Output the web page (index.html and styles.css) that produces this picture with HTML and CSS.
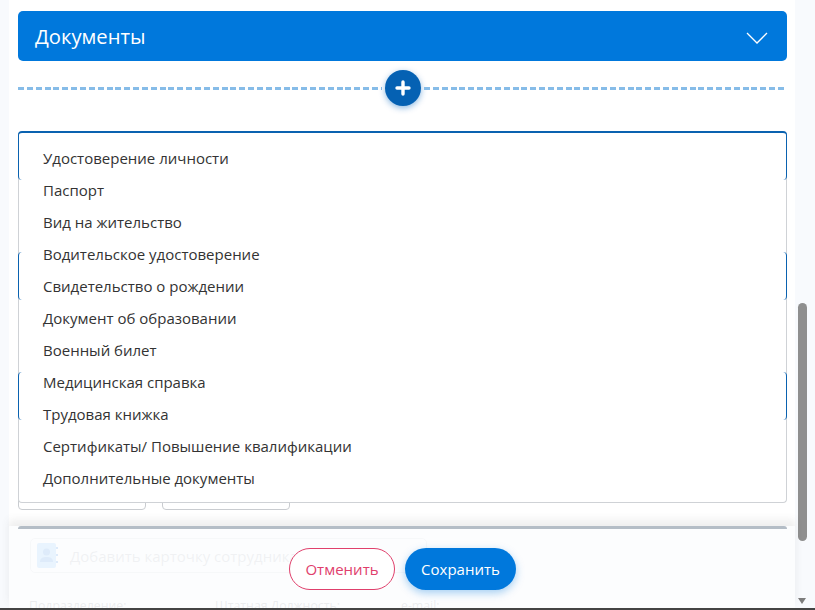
FILE: index.html
```html
<!DOCTYPE html>
<html lang="ru">
<head>
    <meta charset="UTF-8">
    <title>Документы</title>
    <link rel="stylesheet" href="styles.css">
</head>
<body>
    <div class="page">
        <div class="content">
            <div class="section-header">
                <span>Документы</span>
                <svg class="chevron" width="22" height="12" viewBox="0 0 22 12"><path d="M1 1l10 10L21 1" fill="none" stroke="#fff" stroke-width="1.3"/></svg>
            </div>

            <div class="add-row">
                <div class="dash"></div>
                <div class="add-button">
                    <svg width="16" height="16" viewBox="0 0 16 16"><path d="M8 2v12M2 8h12" stroke="#fff" stroke-width="3.4" stroke-linecap="round"/></svg>
                </div>
                <div class="dash"></div>
            </div>

            <!-- Fields behind the open list -->
            <div class="doc-form">
                <div class="field"></div>
                <div class="field"></div>
                <div class="field"></div>
                <div class="small-fields">
                    <div class="small-field"></div>
                    <div class="small-field"></div>
                </div>

                <ul class="dropdown">
                    <li>Удостоверение личности</li>
                    <li>Паспорт</li>
                    <li>Вид на жительство</li>
                    <li>Водительское удостоверение</li>
                    <li>Свидетельство о рождении</li>
                    <li>Документ об образовании</li>
                    <li>Военный билет</li>
                    <li>Медицинская справка</li>
                    <li>Трудовая книжка</li>
                    <li>Сертификаты/ Повышение квалификации</li>
                    <li>Дополнительные документы</li>
                </ul>
            </div>

            <!-- Faded card under the footer -->
            <div class="employee-card">
                <div class="card-title">
                    <svg class="card-icon" width="22" height="25" viewBox="0 0 22 25">
                        <path d="M3 0h15a2 2 0 0 1 2 2v21a2 2 0 0 1-2 2H3a2 2 0 0 1-2-2V2a2 2 0 0 1 2-2z" fill="#79bdfa"/>
                        <circle cx="10.500" cy="9" r="3.500" fill="#2a80e0"/>
                        <path d="M4 19c0-4 3-5 6.500-5s6.500 1 6.500 5z" fill="#2a80e0"/>
                        <path d="M20 5h2M20 12h2M20 19h2" stroke="#2a80e0" stroke-width="2"/>
                    </svg>
                    <span>Добавить карточку сотрудника</span>
                </div>
                <div class="card-labels">
                    <span class="card-label">Подразделение:</span>
                    <span class="card-label">Штатная Должность:</span>
                    <span class="card-label">e-mail:</span>
                </div>
            </div>
        </div>

        <div class="scrollbar">
            <div class="thumb"></div>
            <div class="arrow"></div>
        </div>

        <div class="footer">
            <button class="btn btn-cancel">Отменить</button>
            <button class="btn btn-save">Сохранить</button>
        </div>
    </div>
    <div class="bottom-line"></div>
</body>
</html>
```

FILE: styles.css
```css
html, body {
    height: 100%;
    margin: 0;
    overflow: hidden;
}
body {
    font-family: "Open Sans", "Noto Sans", Arial, sans-serif;
    background-color: #f8fafd;
    color: #333;
}
.page {
    position: relative;
    display: flex;
    height: 608px;
    overflow: hidden;
}
.content {
    width: 769px;
    margin-left: 9px;
    padding: 11px 8px 0 9px;
    background-color: #fff;
    flex-shrink: 0;
}
.section-header {
    display: flex;
    justify-content: space-between;
    align-items: center;
    height: 50px;
    padding: 0 19px 0 17px;
    background-color: #0078dc;
    border-radius: 5px;
    color: #fff;
    font-size: 20.2px;
}
.chevron {
    margin-top: 3px;
}
.add-row {
    display: flex;
    align-items: center;
    gap: 3px;
    height: 36px;
    margin-top: 9px;
}
.dash {
    flex: 1;
    height: 3px;
    background-image: repeating-linear-gradient(90deg, #86bce8 0, #86bce8 6px, transparent 6px, transparent 8.85px);
}
.add-button {
    display: flex;
    align-items: center;
    justify-content: center;
    width: 36px;
    height: 36px;
    border-radius: 50%;
    background-color: #0561b3;
    box-shadow: 0 2px 6px rgba(0, 100, 190, 0.45);
}
.doc-form {
    position: relative;
    margin-top: 25px;
}
/* only the side borders of these show past the open list */
.field {
    position: relative;
    z-index: 1;
    box-sizing: border-box;
    height: 48px;
    margin-bottom: 72px;
    border-left: 1px solid #0a62b0;
    border-right: 1px solid #0a62b0;
    border-radius: 4px;
}
.field:first-child {
    height: 49px;
    border-top: 2px solid #0a62b0;
}
.field:nth-child(3) {
    margin-bottom: 70px;
}
.small-fields {
    display: flex;
    gap: 16px;
}
.small-field {
    box-sizing: border-box;
    width: 128px;
    height: 20px;
    border: 1px solid #c9ccd0;
    border-radius: 4px;
}
.dropdown {
    position: absolute;
    top: 2px;
    left: 0;
    right: 0;
    box-sizing: border-box;
    height: 370px;
    margin: 0;
    padding: 9px 0 0 24px;
    list-style: none;
    background-color: #fff;
    border: 1px solid #cfd2d6;
    border-top: none;
    border-radius: 0 0 4px 4px;
}
.dropdown li {
    height: 32px;
    line-height: 32px;
    font-size: 15px;
    color: #333;
}
.employee-card {
    margin-top: 28px;
}
.card-title {
    display: flex;
    align-items: center;
    gap: 12px;
    box-sizing: border-box;
    width: 397px;
    height: 35px;
    margin-left: 12px;
    padding: 0 5px;
    border: 1px solid #d6d8dc;
    border-radius: 5px;
    font-size: 15px;
    color: #a8acb2;
}
.card-labels {
    display: flex;
    margin-top: 24px;
    padding-left: 11px;
    font-size: 12.3px;
    color: #878a90;
}
.card-label {
    width: 186px;
}
.scrollbar {
    position: relative;
    flex: 1;
}
.thumb {
    position: absolute;
    top: 303px;
    left: 3px;
    width: 9px;
    height: 238px;
    border-radius: 5px;
    background-color: #8f8f8f;
}
.arrow {
    position: absolute;
    top: 598px;
    left: 3px;
    width: 0;
    height: 0;
    border-left: 4.500px solid transparent;
    border-right: 4.500px solid transparent;
    border-top: 6px solid #7d7d7d;
}
.footer {
    position: absolute;
    top: 526px;
    left: 9px;
    width: 786px;
    height: 82px;
    box-sizing: border-box;
    padding: 22px 0 0 280px;
    display: flex;
    gap: 10px;
    align-items: flex-start;
    background-color: rgba(252, 253, 254, 0.86);
    box-shadow: 0 -6px 8px rgba(90, 90, 90, 0.1);
}
.footer::before {
    content: "";
    position: absolute;
    top: 0;
    left: 9px;
    width: 769px;
    height: 3px;
    background-color: #b4bdc6;
    border-radius: 4px 4px 0 0;
}
.btn {
    height: 42px;
    border-radius: 21px;
    font-family: inherit;
    font-size: 15px;
    cursor: pointer;
}
.btn-cancel {
    width: 106px;
    background-color: #fff;
    border: 1px solid #e0406c;
    color: #e0406c;
}
.btn-save {
    width: 111px;
    background-color: #0078dc;
    border: none;
    color: #fff;
    box-shadow: 0 3px 8px rgba(0, 120, 220, 0.35);
}
.bottom-line {
    height: 2px;
    background-color: #444;
}
```
